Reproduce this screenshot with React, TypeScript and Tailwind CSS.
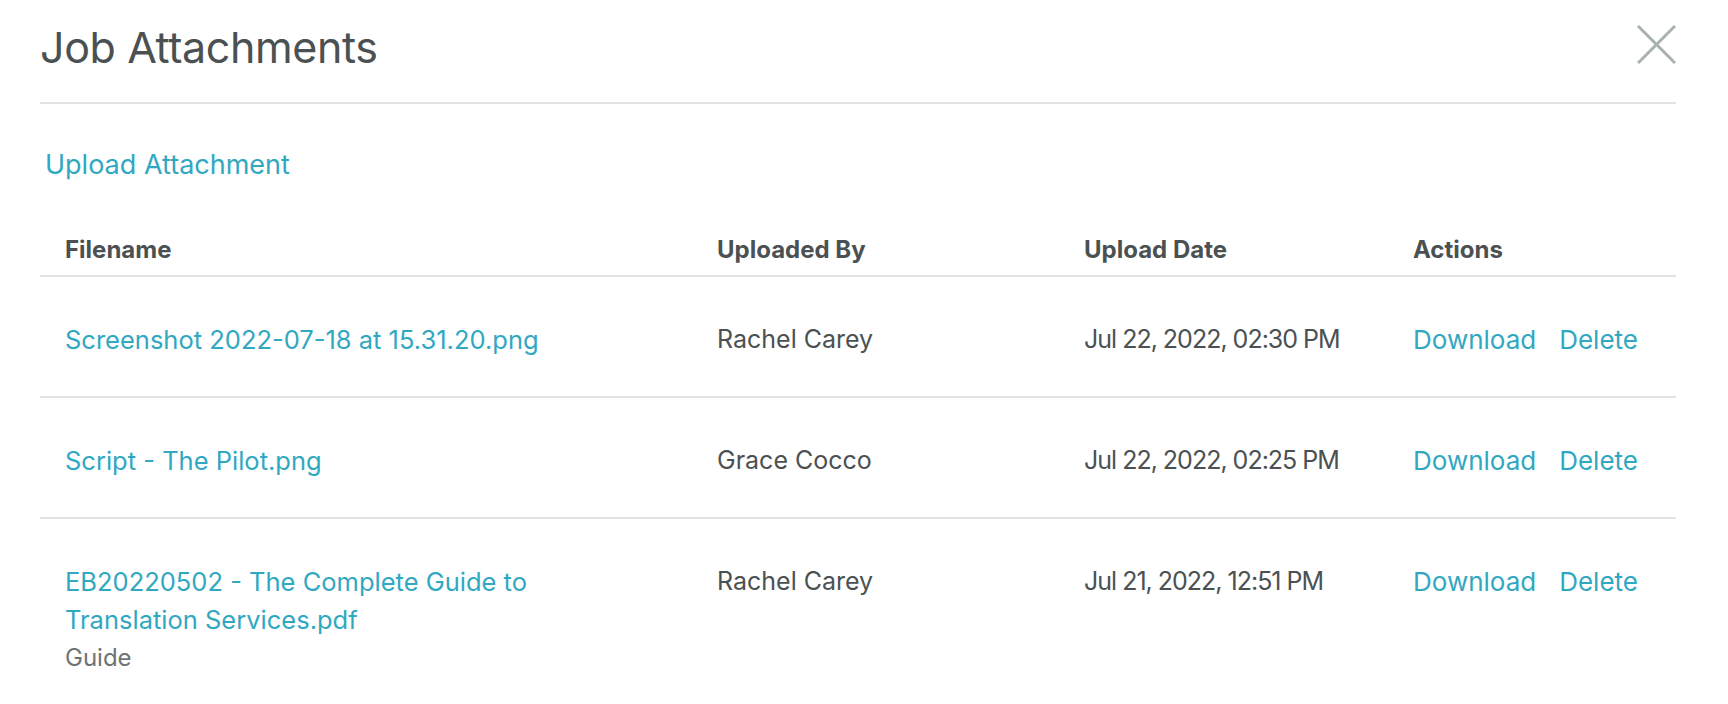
type Attachment = {
  name: string
  note?: string
  by: string
  date: string
}

const ATTACHMENTS: Attachment[] = [
  { name: 'Screenshot 2022-07-18 at 15.31.20.png', by: 'Rachel Carey', date: 'Jul 22, 2022, 02:30 PM' },
  { name: 'Script - The Pilot.png', by: 'Grace Cocco', date: 'Jul 22, 2022, 02:25 PM' },
  {
    name: 'EB20220502 - The Complete Guide to Translation Services.pdf',
    note: 'Guide',
    by: 'Rachel Carey',
    date: 'Jul 21, 2022, 12:51 PM'
  }
]

const cols = 'grid grid-cols-[652px_367px_329px_1fr]'

export default function App(): JSX.Element {
  return (
    <div className="min-h-screen bg-white pl-10 pr-[52px] font-['Inter',sans-serif] text-[#4b5152]">
      {/* Header */}
      <div className="flex items-start justify-between border-b-2 border-[#e3e3e3] pt-[19px] pb-[27px]">
        <h1 className="text-[43px] leading-[56px] font-normal tracking-[-0.4px]">Job Attachments</h1>
        <button type="button" className="mt-[6px]" aria-label="Close">
          <svg width="39" height="39" viewBox="0 0 39 39" className="block">
            <path d="M1 1 L38 38 M38 1 L1 38" stroke="#aab2b1" strokeWidth="3" fill="none" />
          </svg>
        </button>
      </div>

      <div className="pt-[44px] pb-[53px] pl-[5px]">
        <a className="text-[27px] leading-[34px] text-[#31a8c1]">Upload Attachment</a>
      </div>

      {/* Table */}
      <div className={`${cols} border-b-2 border-[#e3e3e3] pb-[10px] text-[24px] leading-[30px] font-bold`}>
        <div className="pl-[25px]">Filename</div>
        <div className="pl-[25px]">Uploaded By</div>
        <div className="pl-[25px]">Upload Date</div>
        <div className="pl-[25px]">Actions</div>
      </div>

      {ATTACHMENTS.map((a, i) => (
        <div
          key={a.name}
          className={`${cols} pt-[44px] pb-[37px] text-[25px] leading-[37px] ${i < ATTACHMENTS.length - 1 ? 'border-b-2 border-[#e3e3e3]' : ''}`}
        >
          <div className="pl-[25px] pr-[100px]">
            <a className="text-[25.5px] leading-[38px] text-[#31a8c1]">{a.name}</a>
            {a.note && <div className="text-[24px] leading-[38px] text-[#6e7374]">{a.note}</div>}
          </div>
          <div className="pl-[25px]">{a.by}</div>
          <div className="pl-[25px] tracking-[-1px]">{a.date}</div>
          <div className="flex gap-[23px] pl-[25px] text-[26px] text-[#31a8c1]">
            <a>Download</a>
            <a>Delete</a>
          </div>
        </div>
      ))}
    </div>
  )
}
